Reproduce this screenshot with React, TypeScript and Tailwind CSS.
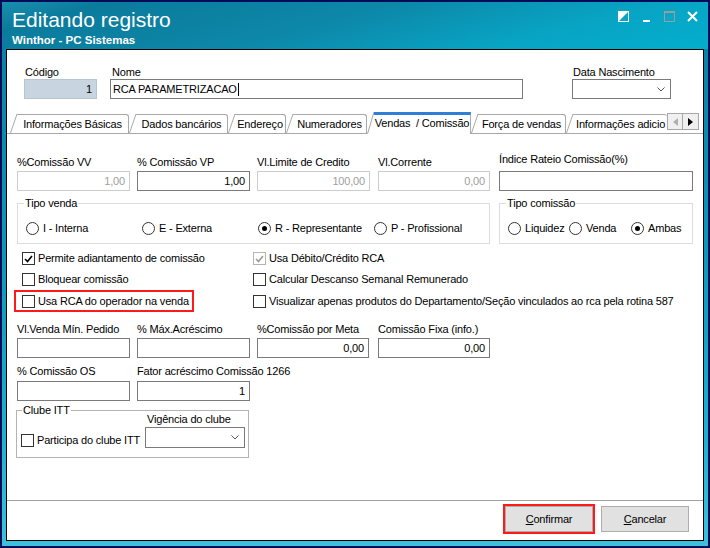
import React from "react";

const font = "font-['Liberation_Sans',Arial,sans-serif]";

function Chevron() {
  return (
    <svg width="8" height="5" viewBox="0 0 8 5" className="shrink-0">
      <polyline points="0.5,0.5 4,4 7.5,0.5" fill="none" stroke="#555" strokeWidth="1" />
    </svg>
  );
}

function Box({ value, w, disabled, dim }: { value?: string; w: string; disabled?: boolean; dim?: boolean }) {
  return (
    <div
      className={`flex h-[20px] items-center justify-end border bg-white pr-[4px] ${w} ${
        disabled ? "border-[#cccccc] text-[#a0a0a0]" : "border-[#7a7a7a]"
      } ${dim ? "!bg-[#c8d4e0] !border-[#b8c4d0]" : ""}`}
    >
      {value}
    </div>
  );
}

function Field({ label, w, value, disabled, gap }: { label: string; w: string; value?: string; disabled?: boolean; gap?: string }) {
  return (
    <div className={`flex flex-col ${gap ?? ""}`}>
      <div className="mb-px h-[15px] whitespace-nowrap leading-[15px]">{label}</div>
      <Box w={w} value={value} disabled={disabled} />
    </div>
  );
}

function Check({ checked, disabled }: { checked?: boolean; disabled?: boolean }) {
  return (
    <span
      className={`flex h-[13px] w-[13px] shrink-0 items-center justify-center border bg-white ${
        disabled ? "border-[#b4b4b4]" : "border-[#333333]"
      }`}
    >
      {checked && (
        <svg width="9" height="8" viewBox="0 0 9 8">
          <polyline points="1,4 3.5,6.5 8,1" fill="none" stroke={disabled ? "#9a9a9a" : "#000"} strokeWidth="1.6" />
        </svg>
      )}
    </span>
  );
}

function Radio({ label, on, w }: { label: string; on?: boolean; w: string }) {
  return (
    <span className={`flex items-center gap-[4px] whitespace-nowrap ${w}`}>
      <span className="flex h-[13px] w-[13px] shrink-0 items-center justify-center rounded-full border border-[#333333] bg-white">
        {on && <span className="h-[5px] w-[5px] rounded-full bg-black" />}
      </span>
      {label}
    </span>
  );
}

function Tab({ label, w, active, last }: { label: string; w: string; active?: boolean; last?: boolean }) {
  return (
    <div className={`flex shrink-0 ${w} ${active ? "relative z-10 -mb-px h-[22px]" : "h-[19px]"}`}>
      <svg width="7" className="h-full shrink-0" preserveAspectRatio="none" viewBox="0 0 7 20">
        <polygon points="0,20 7,0 7,20" fill="#ffffff" />
        <line x1="0.5" y1="20" x2="7" y2="0" stroke="#a8a8a8" strokeWidth="1" />
      </svg>
      <div
        className={`flex flex-1 items-center justify-center overflow-hidden whitespace-pre bg-white ${
          active
            ? "border-r border-t-[3px] border-r-[#a8a8a8] border-t-[#2f7ed8] pb-[2px]"
            : "rounded-tr-[3px] border-r border-t border-[#a8a8a8]"
        } ${last ? "!justify-start rounded-none !border-r-0 pl-[3px]" : ""}`}
      >
        {label}
      </div>
    </div>
  );
}

function CheckRow({ label, checked, disabled }: { label: string; checked?: boolean; disabled?: boolean }) {
  return (
    <span className="flex items-center gap-[3px] whitespace-nowrap">
      <Check checked={checked} disabled={disabled} />
      {label}
    </span>
  );
}

export default function App() {
  return (
    <div className={`${font} h-[548px] w-[710px] bg-[#000c5a] p-[2px] text-[11px] text-black`}>
      <div className="flex h-full flex-col bg-[linear-gradient(180deg,#0a7d9e_0%,#0b97b7_45%,#1bb2cf_80%,#3cc2da_100%)]">
        {/* barra de título */}
        <div className="flex h-[47px] shrink-0 flex-col bg-[linear-gradient(165deg,#1a8eae_0%,#0b7b9c_12%,#0d87a8_45%,#08a4c4_75%,#03aecd_100%)]">
          <div className="flex justify-between">
            <div className="pl-[10px] pt-[6px] text-white">
              <div className="text-[21px] leading-[24px]">Editando registro</div>
              <div className="mt-[2px] text-[11.5px] font-bold leading-[13px]">Winthor - PC Sistemas</div>
            </div>
            <div className="flex gap-[12px] pr-[10px] pt-[9px]">
              <svg width="11" height="11" viewBox="0 0 11 11">
                <polygon points="0,0 11,0 0,11" fill="#fff" />
                <rect x="0.5" y="0.5" width="10" height="10" fill="none" stroke="#fff" />
              </svg>
              <svg width="11" height="11" viewBox="0 0 11 11">
                <rect x="2" y="9" width="7" height="2" fill="#fff" />
              </svg>
              <svg width="11" height="11" viewBox="0 0 11 11">
                <rect x="0.5" y="0.5" width="10" height="10" fill="none" stroke="#9c9c9c" />
                <rect x="0" y="0" width="11" height="2" fill="#9c9c9c" />
              </svg>
              <svg width="11" height="11" viewBox="0 0 11 11">
                <path d="M1 1 L10 10 M10 1 L1 10" stroke="#fff" strokeWidth="2" />
              </svg>
            </div>
          </div>
          <div className="mb-[2px] mt-auto h-px bg-[linear-gradient(90deg,transparent_0%,transparent_55%,#f0a020_80%,#f5a300_100%)]" />
        </div>

        {/* conteúdo */}
        <div className="mx-[4px] mb-[5px] flex flex-1 flex-col border border-black bg-white tracking-[-0.18px]">
          {/* cabeçalho */}
          <div className="flex pl-[17px] pt-[15px]">
            <div className="flex flex-col">
              <div className="h-[14px] pl-px leading-[14px]">Código</div>
              <Box w="w-[73px]" value="1" dim />
            </div>
            <div className="ml-[13px] flex flex-col">
              <div className="h-[14px] pl-[2px] leading-[14px]">Nome</div>
              <div className="flex h-[20px] w-[413px] items-center border border-[#7a7a7a] pl-[2px]">
                RCA PARAMETRIZACAO<span className="ml-px h-[13px] w-px bg-black" />
              </div>
            </div>
            <div className="ml-[49px] flex flex-col">
              <div className="h-[14px] pl-px leading-[14px]">Data Nascimento</div>
              <div className="flex h-[20px] w-[99px] items-center justify-end border border-[#7a7a7a] pr-[5px]">
                <Chevron />
              </div>
            </div>
          </div>

          {/* abas */}
          <div className="mt-[13px] flex h-[22px] items-end border-b border-[#a8a8a8] pl-[3px]">
            <Tab label="Informações Básicas" w="w-[119px]" />
            <Tab label="Dados bancários" w="w-[99px]" />
            <Tab label="Endereço" w="w-[58px]" />
            <Tab label="Numeradores" w="w-[81px]" />
            <Tab label="Vendas  / Comissão" w="w-[104px]" active />
            <Tab label="Força de vendas" w="w-[95px]" />
            <Tab label="Informações adicio" w="w-[101px]" last />
            <div className="mb-[3px] flex h-[17px]">
              <div className="flex w-[16px] items-center justify-center border border-[#a8a8a8] bg-[#f0f0f0]">
                <svg width="5" height="8" viewBox="0 0 5 8"><polygon points="5,0 0,4 5,8" fill="#b0b0b0" /></svg>
              </div>
              <div className="flex w-[16px] items-center justify-center border border-l-0 border-[#a8a8a8] bg-[#f0f0f0]">
                <svg width="5" height="8" viewBox="0 0 5 8"><polygon points="0,0 5,4 0,8" fill="#000" /></svg>
              </div>
            </div>
          </div>

          {/* painel */}
          <div className="flex flex-1 flex-col pl-[10px] pt-[18px]">
            <div className="flex items-end">
              <Field label="%Comissão VV" w="w-[113px]" value="1,00" disabled />
              <Field label="% Comissão VP" w="w-[113px]" value="1,00" gap="ml-[7px]" />
              <Field label="Vl.Limite de Credito" w="w-[113px]" value="100,00" disabled gap="ml-[7px]" />
              <Field label="Vl.Corrente" w="w-[112px]" value="0,00" disabled gap="ml-[8px]" />
              <div className="ml-[9px] flex flex-col">
                <div className="mb-[4px] h-[15px] leading-[15px]">Índice Rateio Comissão(%)</div>
                <Box w="w-[194px]" />
              </div>
            </div>

            <div className="mt-[6px] flex">
              <fieldset className="w-[473px] border border-[#dcdcdc] pb-[8px] pl-[8px]">
                <legend className="-ml-[2px] px-px leading-[13px]">Tipo venda</legend>
                <div className="mt-[11px] flex h-[14px] items-center">
                  <Radio label="I - Interna" w="w-[116px]" />
                  <Radio label="E - Externa" w="w-[116px]" />
                  <Radio label="R - Representante" w="w-[116px]" on />
                  <Radio label="P - Profissional" w="w-[100px]" />
                </div>
              </fieldset>
              <fieldset className="ml-[9px] w-[194px] border border-[#dcdcdc] pb-[8px] pl-[8px]">
                <legend className="-ml-[2px] px-px leading-[13px]">Tipo comissão</legend>
                <div className="mt-[11px] flex h-[14px] items-center">
                  <Radio label="Liquidez" w="w-[61px]" />
                  <Radio label="Venda" w="w-[62px]" />
                  <Radio label="Ambas" w="w-[55px]" on />
                </div>
              </fieldset>
            </div>

            <div className="-ml-[3px] mt-[4px] flex flex-col">
              <div className="flex h-[21px] items-center">
                <div className="w-[180px] pl-[8px]">
                  <CheckRow label="Permite adiantamento de comissão" checked />
                </div>
                <div className="ml-[59px]">
                  <CheckRow label="Usa Débito/Crédito RCA" checked disabled />
                </div>
              </div>
              <div className="flex h-[21px] items-center">
                <div className="w-[180px] pl-[8px]">
                  <CheckRow label="Bloquear comissão" />
                </div>
                <div className="ml-[59px]">
                  <CheckRow label="Calcular Descanso Semanal Remunerado" />
                </div>
              </div>
              <div className="flex h-[22px] items-center">
                <div className="flex h-[22px] w-[180px] items-center border-2 border-[#ff1a1a] pl-[6px]">
                  <CheckRow label="Usa RCA do operador na venda" />
                </div>
                <div className="ml-[59px]">
                  <CheckRow label="Visualizar apenas produtos do Departamento/Seção vinculados ao rca pela rotina 587" />
                </div>
              </div>
            </div>

            <div className="mt-[10px] flex items-end">
              <Field label="Vl.Venda Mín. Pedido" w="w-[113px]" />
              <Field label="% Máx.Acréscimo" w="w-[113px]" gap="ml-[7px]" />
              <Field label="%Comissão por Meta" w="w-[112px]" value="0,00" gap="ml-[7px]" />
              <Field label="Comissão Fixa (info.)" w="w-[112px]" value="0,00" gap="ml-[9px]" />
            </div>

            <div className="mt-[6px] flex items-end">
              <div className="flex flex-col">
                <div className="mb-[2px] h-[15px] leading-[15px]">% Comissão OS</div>
                <Box w="w-[113px]" />
              </div>
              <div className="ml-[7px] flex flex-col">
                <div className="mb-[2px] h-[15px] leading-[15px]">Fator acréscimo Comissão 1266</div>
                <Box w="w-[113px]" value="1" />
              </div>
            </div>

            <fieldset className="-ml-[1px] mt-[3px] w-[233px] border border-[#b4b4b4] pb-[9px] pl-[4px] pr-[3px]">
              <legend className="ml-[1px] px-px leading-[13px]">Clube ITT</legend>
              <div className="flex items-end justify-between">
                <div className="mb-px flex h-[14px] items-center">
                  <CheckRow label="Participa do clube ITT" />
                </div>
                <div className="-mt-[5px] flex flex-col">
                  <div className="h-[15px] pl-[2px] leading-[15px]">Vigência do clube</div>
                  <div className="flex h-[21px] w-[100px] items-center justify-end border border-[#7a7a7a] pr-[5px]">
                    <Chevron />
                  </div>
                </div>
              </div>
            </fieldset>
          </div>

          {/* botões */}
          <div className="flex h-[40px] shrink-0 items-start justify-end gap-[6px] border-t border-[#a0a0a0] pr-[14px] pt-[3px]">
            <div className="border-2 border-[#ff1a1a]">
              <button className="flex h-[26px] w-[88px] items-center justify-center border border-[#adadad] bg-[#e1e1e1]">
                <span><span className="underline">C</span>onfirmar</span>
              </button>
            </div>
            <button className="mt-[2px] flex h-[26px] w-[88px] items-center justify-center border border-[#adadad] bg-[#e1e1e1]">
              <span><span className="underline">C</span>ancelar</span>
            </button>
          </div>
        </div>
      </div>
    </div>
  );
}
